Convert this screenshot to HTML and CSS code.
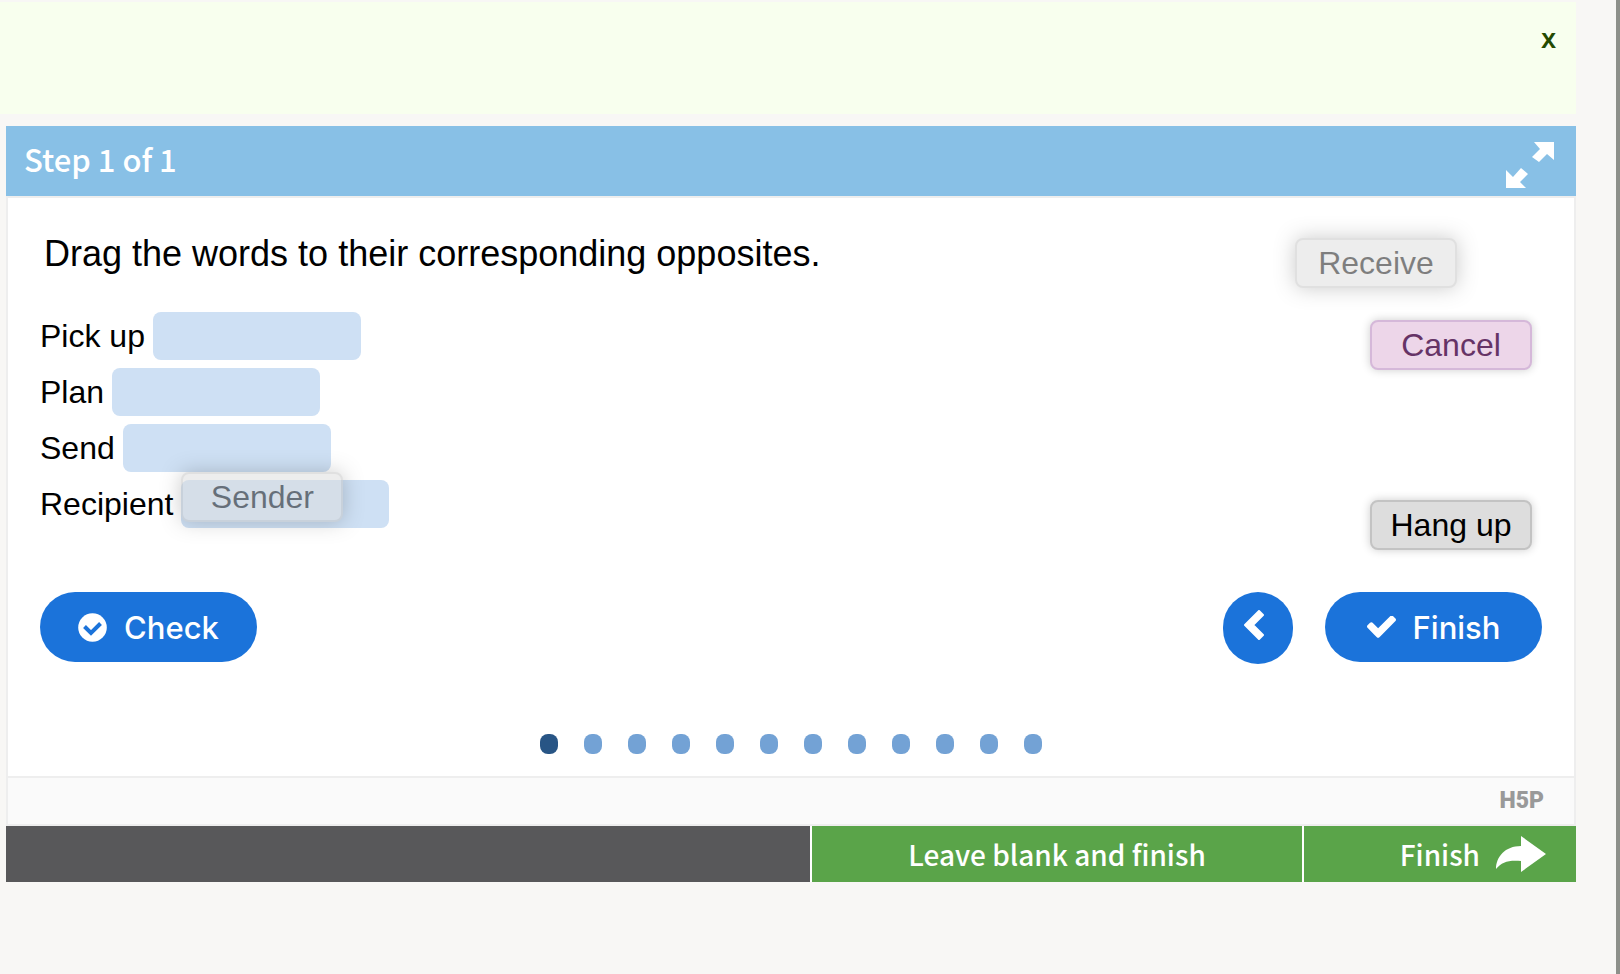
FILE: index.html
```
<!DOCTYPE html>
<html lang="en">
<head>
    <meta charset="UTF-8">
    <meta name="viewport" content="width=device-width, initial-scale=1.0">
    <title>Drag the words</title>
    <link rel="stylesheet" href="styles.css">
</head>
<body>

<div class="notice">
    <button type="button" class="notice-close">X</button>
</div>

<main class="activity">
    <header class="step-bar">
        <h1>Step 1 of 1</h1>
        <button type="button" class="fullscreen" aria-label="Fullscreen">
            <svg width="48" height="48" viewBox="0 0 48 48" fill="#fff">
                <path d="M28 1H48V19L41 13 33 21 26 16 34 8Z"/>
                <path d="M0 29L7 36 15 27 22 33 14 41 20 47H0Z"/>
            </svg>
        </button>
    </header>

    <div class="card">
        <section class="question">
            <div class="task">
                <h2>Drag the words to their corresponding opposites.</h2>
                <p class="line">Pick up <span class="dropzone"></span></p>
                <p class="line">Plan <span class="dropzone"></span></p>
                <p class="line">Send <span class="dropzone"></span></p>
                <p class="line">Recipient <span class="dropzone"><button type="button" class="word dragging over-zone">Sender</button></span></p>
            </div>
            <div class="word-bank">
                <div class="slot"><button type="button" class="word hovered">Cancel</button></div>
                <div class="slot"></div>
                <div class="slot"></div>
                <div class="slot"><button type="button" class="word">Hang up</button></div>
                <button type="button" class="word dragging in-bank">Receive</button>
            </div>
        </section>

        <div class="actions">
            <button type="button" class="pill">
                <svg width="29" height="29" viewBox="0 0 29 29">
                    <circle cx="14.5" cy="14.5" r="14.3" fill="#fff"/>
                    <path d="M6.5 13.5L13 20 22.5 10.5" fill="none" stroke="#1b73da" stroke-width="4"/>
                </svg>
                Check
            </button>
            <button type="button" class="pill prev" aria-label="Previous">
                <svg width="20" height="30" viewBox="0 0 20 30" fill="#fff" stroke="#fff" stroke-width="2" stroke-linejoin="round">
                    <path d="M15 1L19 5 9 15 19 25 15 29 1 15Z"/>
                </svg>
            </button>
            <button type="button" class="pill">
                <svg width="29" height="22" viewBox="121 378 1550 1144" fill="#fff">
                    <path d="M1671 566q0 40-28 68l-724 724-136 136q-28 28-68 28t-68-28l-136-136-362-362q-28-28-28-68t28-68l136-136q28-28 68-28t68 28l294 295 656-657q28-28 68-28t68 28l136 136q28 28 28 68z"/>
                </svg>
                Finish
            </button>
        </div>

        <nav class="dots" aria-label="Progress">
            <a href="#" class="dot current" aria-label="Page 1"></a>
            <a href="#" class="dot" aria-label="Page 2"></a>
            <a href="#" class="dot" aria-label="Page 3"></a>
            <a href="#" class="dot" aria-label="Page 4"></a>
            <a href="#" class="dot" aria-label="Page 5"></a>
            <a href="#" class="dot" aria-label="Page 6"></a>
            <a href="#" class="dot" aria-label="Page 7"></a>
            <a href="#" class="dot" aria-label="Page 8"></a>
            <a href="#" class="dot" aria-label="Page 9"></a>
            <a href="#" class="dot" aria-label="Page 10"></a>
            <a href="#" class="dot" aria-label="Page 11"></a>
            <a href="#" class="dot" aria-label="Page 12"></a>
        </nav>

        <div class="h5p-bar">
            <a href="#" class="h5p-logo">H5P</a>
        </div>
    </div>

    <footer class="bottom-bar">
        <button type="button" class="skip">Leave blank and finish</button>
        <button type="button" class="finish">
            Finish
            <svg width="50" height="36" viewBox="0 0 50 36" fill="#fff">
                <path d="M0 33C0 21 9 10 25 10V0L50 18 25 36V25C12 24 6 26 0 33Z"/>
            </svg>
        </button>
    </footer>
</main>

</body>
</html>
```
FILE: styles.css
```
* {
    box-sizing: border-box;
}

body {
    margin: 0;
    min-height: 100vh;
    padding: 2px 40px 0 0;
    border-right: 4px solid #8d908a;
    background-color: #f8f7f5;
    font-family: "Liberation Sans", Arial, sans-serif;
    font-size: 32px;
    color: #000;
}

button {
    margin: 0;
    padding: 0;
    border: none;
    background: none;
    font: inherit;
    color: inherit;
    cursor: pointer;
}

h1, h2, p {
    margin: 0;
}

svg {
    display: block;
}

.notice {
    display: flex;
    justify-content: flex-end;
    align-items: flex-start;
    height: 112px;
    padding: 21px 20px;
    background-color: #f8ffee;
}

.notice-close {
    font-family: "Noto Sans", sans-serif;
    font-size: 22px;
    font-weight: 700;
    line-height: 32px;
    color: #244a00;
}

.activity {
    margin: 12px 0 0 6px;
}

.step-bar {
    display: flex;
    justify-content: space-between;
    align-items: flex-start;
    height: 70px;
    padding: 0 22px 0 18px;
    background-color: #88c0e6;
    color: #fff;
}

.step-bar h1 {
    font-family: "Noto Sans CJK SC", sans-serif;
    font-size: 31px;
    font-weight: 500;
    line-height: 66px;
}

.fullscreen {
    margin-top: 15px;
}

.card {
    border: 2px solid #eee;
    background-color: #fff;
}

.question {
    display: flex;
    justify-content: space-between;
    padding: 34px 42px 0 32px;
}

.task h2 {
    margin-bottom: 36px;
    padding-left: 4px;
    font-size: 36px;
    font-weight: 400;
    line-height: 44px;
}

.line {
    display: flex;
    align-items: center;
    gap: 8px;
    height: 48px;
    margin-bottom: 8px;
}

.dropzone {
    position: relative;
    width: 208px;
    height: 48px;
    border-radius: 8px;
    background-color: #cee0f4;
}

.word-bank {
    position: relative;
    display: flex;
    flex-direction: column;
    gap: 10px;
    padding-top: 88px;
}

.slot {
    width: 162px;
    height: 50px;
}

.word {
    width: 162px;
    height: 50px;
    border: 2px solid #c3c3c3;
    border-radius: 8px;
    background-color: #ddd;
    box-shadow: 0 0 10px rgba(0, 0, 0, 0.2);
    line-height: 46px;
}

.word.hovered {
    border-color: #d5b8d9;
    background-color: #edd6e9;
    color: #663366;
}

.word.dragging {
    position: absolute;
    box-shadow: 0 0 20px rgba(0, 0, 0, 0.4);
    opacity: 0.5;
}

.word.over-zone {
    left: 0;
    top: -8px;
}

.word.in-bank {
    right: 75px;
    top: 6px;
}

.actions {
    display: flex;
    align-items: flex-start;
    gap: 32px;
    padding: 42px 32px 0;
}

.pill {
    display: flex;
    justify-content: center;
    align-items: center;
    gap: 17px;
    min-width: 217px;
    height: 70px;
    padding: 0 38px;
    border-radius: 35px;
    background-color: #1b73da;
    font-family: Inter, sans-serif;
    font-size: 31px;
    font-weight: 500;
    color: #fff;
}

.prev {
    min-width: 70px;
    height: 72px;
    margin-left: auto;
    padding: 0 8px 6px 0;
}

.dots {
    display: flex;
    justify-content: center;
    gap: 26px;
    padding: 70px 0 22px;
}

.dot {
    width: 18px;
    height: 20px;
    border-radius: 8px;
    background-color: #73a2d5;
}

.dot.current {
    background-color: #285585;
}

.h5p-bar {
    display: flex;
    justify-content: flex-end;
    align-items: center;
    height: 48px;
    padding-right: 30px;
    border-top: 2px solid #eee;
    background-color: #fafafa;
}

.h5p-logo {
    font-family: Roboto, sans-serif;
    font-size: 23px;
    font-weight: 900;
    line-height: 40px;
    color: #999;
    text-decoration: none;
}

.bottom-bar {
    display: flex;
    justify-content: flex-end;
    height: 56px;
    background-color: #58585a;
    font-family: "Noto Sans CJK SC", sans-serif;
    font-size: 28px;
    font-weight: 500;
    line-height: 56px;
    color: #fff;
}

.skip {
    width: 492px;
    border-left: 2px solid #fff;
    background-color: #5aa449;
}

.finish {
    display: flex;
    justify-content: flex-end;
    align-items: center;
    gap: 16px;
    width: 274px;
    padding-right: 30px;
    border-left: 2px solid #fff;
    background-color: #5aa449;
}
```
